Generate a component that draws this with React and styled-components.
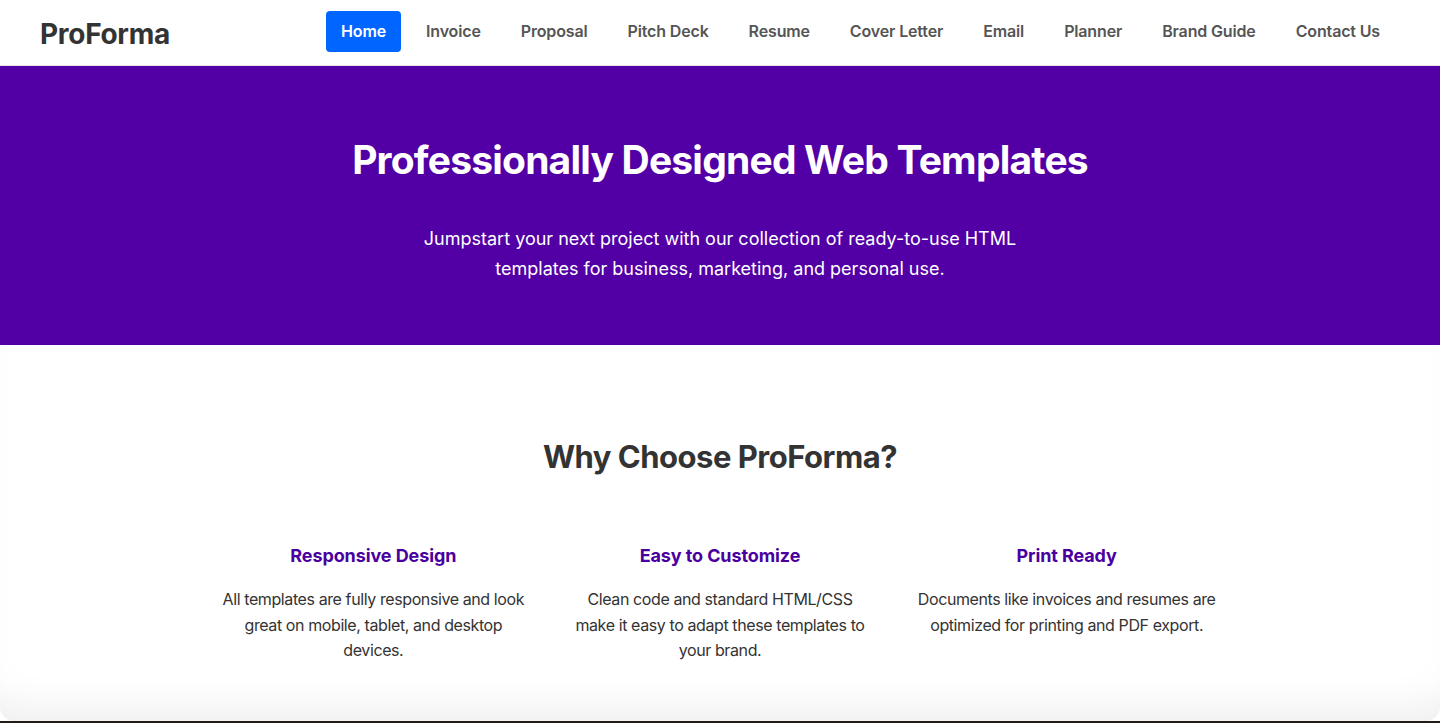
import React from "react";
import styled, { createGlobalStyle } from "styled-components";

const links = [
  "Home",
  "Invoice",
  "Proposal",
  "Pitch Deck",
  "Resume",
  "Cover Letter",
  "Email",
  "Planner",
  "Brand Guide",
  "Contact Us",
];

const features = [
  {
    title: "Responsive Design",
    text: "All templates are fully responsive and look great on mobile, tablet, and desktop devices.",
  },
  {
    title: "Easy to Customize",
    text: "Clean code and standard HTML/CSS make it easy to adapt these templates to your brand.",
  },
  {
    title: "Print Ready",
    text: "Documents like invoices and resumes are optimized for printing and PDF export.",
  },
];

const App = () => {
  return (
    <>
      <GlobalStyle />
      <Header>
        <Logo>ProForma</Logo>
        <Nav>
          {links.map((link, i) => (
            <NavLink key={link} href="#" $active={i === 0}>
              {link}
            </NavLink>
          ))}
        </Nav>
      </Header>

      <Hero>
        <HeroTitle>Professionally Designed Web Templates</HeroTitle>
        <HeroText>
          Jumpstart your next project with our collection of ready-to-use HTML
          templates for business, marketing, and personal use.
        </HeroText>
      </Hero>

      <Features>
        <SectionTitle>Why Choose ProForma?</SectionTitle>
        <Grid>
          {features.map((f) => (
            <Feature key={f.title}>
              <FeatureTitle>{f.title}</FeatureTitle>
              <FeatureText>{f.text}</FeatureText>
            </Feature>
          ))}
        </Grid>
      </Features>
      <Footer />
    </>
  );
};

export default App;

const GlobalStyle = createGlobalStyle`
  * {
    box-sizing: border-box;
  }
  body {
    margin: 0;
    font-family: Inter, "Noto Sans", sans-serif;
    color: #333;
    background: #fff;
  }
`;

const Header = styled.header`
  height: 66px;
  display: flex;
  align-items: center;
  justify-content: space-between;
  padding: 0 45px 0 40px;
  border-bottom: 1px solid #e6e6e6;
`;

const Logo = styled.div`
  font-size: 28px;
  font-weight: 700;
  color: #333;
  letter-spacing: -0.3px;
  margin-top: 2px;
`;

const Nav = styled.nav`
  display: flex;
  align-items: center;
  gap: 10px;
  margin-top: -2px;
`;

const NavLink = styled.a`
  display: block;
  padding: 10px 15px;
  border-radius: 4px;
  font-size: 16px;
  font-weight: 600;
  line-height: 21px;
  letter-spacing: -0.15px;
  text-decoration: none;
  color: ${(p) => (p.$active ? "#fff" : "#555")};
  background-color: ${(p) => (p.$active ? "#0066ff" : "transparent")};
`;

const Hero = styled.section`
  height: 279px;
  background-color: #5200a6;
  color: white;
  display: flex;
  flex-direction: column;
  align-items: center;
  padding-top: 70px;
`;

const HeroTitle = styled.h1`
  margin: 0;
  font-size: 39px;
  font-weight: 700;
  line-height: 48px;
  letter-spacing: -0.8px;
`;

const HeroText = styled.p`
  margin: 40px 0 0;
  max-width: 610px;
  text-align: center;
  font-size: 18px;
  line-height: 30px;
`;

const Features = styled.section`
  padding: 92px 20px 57px;
  display: flex;
  flex-direction: column;
  align-items: center;
  box-shadow: inset 0 -36px 40px -24px rgba(0, 0, 0, 0.07);
  border-radius: 0 0 14px 14px;
`;

const SectionTitle = styled.h2`
  margin: 0;
  font-size: 31px;
  font-weight: 700;
  line-height: 40px;
  color: #333;
  letter-spacing: -0.5px;
`;

const Grid = styled.div`
  width: 1000px;
  margin-top: 65px;
  display: grid;
  grid-template-columns: repeat(3, 1fr);
  gap: 40px;
`;

const Feature = styled.div`
  text-align: center;
`;

const FeatureTitle = styled.h3`
  margin: 0;
  font-size: 18px;
  font-weight: 700;
  line-height: 28px;
  letter-spacing: -0.1px;
  color: #4a00a0;
`;

const FeatureText = styled.p`
  margin: 17px 0 0;
  font-size: 16px;
  line-height: 25.5px;
  letter-spacing: -0.4px;
  color: #333;
`;

const Footer = styled.footer`
  height: 60px;
  background-color: #221a16;
`;
